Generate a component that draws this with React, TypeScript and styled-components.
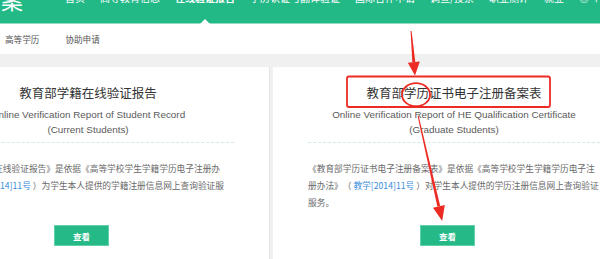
import React from 'react';
import styled, { createGlobalStyle } from 'styled-components';

const GlobalStyle = createGlobalStyle`
  body {
    margin: 0;
    background: #f0f0f0;
    font-family: 'Liberation Sans', 'Noto Sans CJK SC', sans-serif;
    overflow: hidden;
  }
`;

const Page = styled.div`
  position: relative;
  width: 600px;
  height: 259px;
  overflow: hidden;
  background: #f0f0f0;
`;

const Header = styled.header`
  display: flex;
  align-items: flex-start;
  height: 23px;
  background: #23b987;
  border-bottom: 1px solid #8fdcc0;
`;

const Logo = styled.div`
  margin: -12px 0 0 -65px;
  font-size: 22px;
  line-height: 22px;
  color: #ffffff;
  white-space: nowrap;
  font-family: 'Noto Sans CJK SC', sans-serif;
`;

const Nav = styled.nav`
  display: flex;
  gap: 15px;
  margin-left: 42px;
  height: 100%;
`;

const NavItem = styled.div<{ $active?: boolean }>`
  position: relative;
  height: 100%;
  margin-top: -7px;
  font-size: 10px;
  line-height: 10px;
  color: #ffffff;
  white-space: nowrap;
  font-weight: ${(p) => (p.$active ? 700 : 400)};
  font-family: 'Noto Sans CJK SC', sans-serif;

  ${(p) =>
    p.$active &&
    `
    &::after {
      content: '';
      position: absolute;
      left: 50%;
      bottom: -8px;
      margin-left: -5px;
      border-left: 5px solid transparent;
      border-right: 5px solid transparent;
      border-bottom: 5px solid #ffffff;
    }
  `}
`;

const SubNav = styled.div`
  display: flex;
  align-items: center;
  gap: 26px;
  height: 30px;
  padding-left: 5px;
  background: #ffffff;
`;

const SubNavItem = styled.span`
  font-size: 8.6px;
  color: #555555;
  font-family: 'Noto Sans CJK SC', sans-serif;
`;

const Content = styled.main`
  display: flex;
  gap: 3px;
  margin-left: -93px;
  padding-top: 13px;
`;

const Card = styled.section`
  display: flex;
  flex-direction: column;
  flex: 0 0 363px;
  box-sizing: border-box;
  height: 200px;
  padding: 18px 35px 0;
  background: #ffffff;
  border-right: 1px solid #e4e4e4;
`;

const Title = styled.h2`
  margin: 0;
  font-size: 12.5px;
  line-height: 16px;
  font-weight: 400;
  color: #333333;
  text-align: center;
  font-family: 'Noto Sans CJK SC', sans-serif;
`;

const EnTitle = styled.p`
  margin: 6px 0 0;
  font-size: 9.9px;
  line-height: 15px;
  color: #5a5a5a;
  text-align: center;
  white-space: nowrap;
`;

const Divider = styled.hr`
  margin: 5px 0 0;
  border: none;
  border-top: 1px dashed #d3ebe5;
`;

const Body = styled.p`
  margin: 17px 0 0;
  height: 51px;
  font-size: 8.7px;
  line-height: 17px;
  color: #6a6a6a;
  text-spacing-trim: space-all;
  line-break: strict;
  font-family: 'Noto Sans CJK SC', sans-serif;
`;

const DocLink = styled.a`
  color: #3a8ddc;
  text-decoration: none;
`;

const ButtonRow = styled.div`
  display: flex;
  justify-content: center;
  padding-right: 13px;
  margin-top: 14px;
`;

const ViewButton = styled.button`
  width: 55px;
  height: 21px;
  padding: 0;
  border: 1px solid #62d1a8;
  background: #25b988;
  color: #ffffff;
  font-size: 8.5px;
  font-weight: 700;
  font-family: 'Noto Sans CJK SC', sans-serif;
  cursor: pointer;
`;

const Marks = styled.svg`
  position: absolute;
  left: 0;
  top: 0;
  pointer-events: none;
`;

const navItems = ['首页', '高等教育信息', '在线验证报告', '学历认证与翻译验证', '国际合作申请', '调查/投票', '职业测评', '就业'];

const cards = [
  {
    title: '教育部学籍在线验证报告',
    en: ['Online Verification Report of Student Record', '(Current Students)'],
    before: '《教育部学籍在线验证报告》是依据《高等学校学生学籍学历电子注册办法》（ ',
    after: ' ）为学生本人提供的学籍注册信息网上查询验证服务。',
  },
  {
    title: '教育部学历证书电子注册备案表',
    en: ['Online Verification Report of HE Qualification Certificate', '(Graduate Students)'],
    before: '《教育部学历证书电子注册备案表》是依据《高等学校学生学籍学历电子注册办法》（ ',
    after: ' ）对学生本人提供的学历注册信息网上查询验证服务。',
  },
];

export default function App() {
  return (
    <Page>
      <GlobalStyle />
      <Header>
        <Logo>学信档案</Logo>
        <Nav>
          {navItems.map((item) => (
            <NavItem key={item} $active={item === '在线验证报告'}>
              {item}
            </NavItem>
          ))}
          <NavItem>◎ 个人中心</NavItem>
        </Nav>
      </Header>
      <SubNav>
        <SubNavItem>高等学历</SubNavItem>
        <SubNavItem>协助申请</SubNavItem>
      </SubNav>
      <Content>
        {cards.map((card) => (
          <Card key={card.title}>
            <Title>{card.title}</Title>
            <EnTitle>
              {card.en[0]}
              <br />
              {card.en[1]}
            </EnTitle>
            <Divider />
            <Body>
              {card.before}
              <DocLink href="#">教学[2014]11号</DocLink>
              {card.after}
            </Body>
            <ButtonRow>
              <ViewButton>查看</ViewButton>
            </ButtonRow>
          </Card>
        ))}
      </Content>
      <Marks width="600" height="259" viewBox="0 0 600 259">
        <g fill="none" stroke="#ec2b24" strokeWidth="1.8">
          <rect x="347" y="76.5" width="203" height="30.5" rx="2" />
          <ellipse cx="416" cy="94.7" rx="14" ry="11.5" />
        </g>
        <g fill="#ec2b24">
          <polygon points="410.6,31 411.6,31 415.3,62 412.3,62.3" />
          <polygon points="407.8,62.7 419.8,61.5 415,75.5" />
          <polygon points="417.6,116 418.6,115.8 440.2,206 437.4,206.7" />
          <polygon points="433,207.7 444.8,205.1 442.2,221" />
        </g>
      </Marks>
    </Page>
  );
}
